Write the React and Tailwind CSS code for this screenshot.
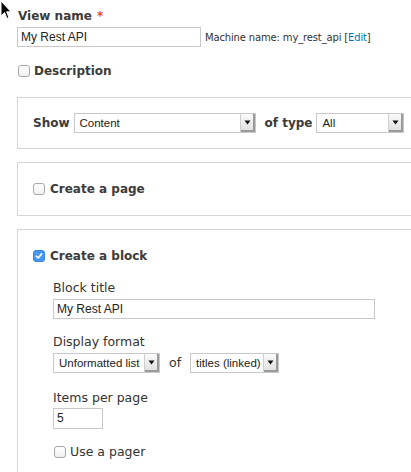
import React from "react";

// Drupal Views wizard, mac-style form controls
const LUCIDA = { fontFamily: '"DejaVu Sans", Verdana, sans-serif' };
const HELV = { fontFamily: '"Liberation Sans", Arial, sans-serif' };

function Cursor() {
  return (
    <svg className="absolute left-0 top-0" width="12" height="20" viewBox="0 0 12 20">
      <path d="M1 1 L1 16 L4.5 12.5 L7 18.5 L9 17.6 L6.6 11.8 L11 11.8 Z" fill="#000" stroke="#fff" strokeWidth="1" />
    </svg>
  );
}

function Checkbox({ checked }) {
  if (checked) {
    return (
      <span className="inline-flex w-[12px] h-[12px] rounded-[3px] bg-[#4598f4] border border-[#3585e6] items-center justify-center shrink-0">
        <svg width="8" height="8" viewBox="0 0 8 8">
          <path d="M1.3 4.2 L3.2 6 L6.7 1.8" fill="none" stroke="#fff" strokeWidth="1.6" strokeLinecap="round" strokeLinejoin="round" />
        </svg>
      </span>
    );
  }
  return (
    <span className="inline-block w-[12px] h-[12px] rounded-[3px] border border-[#a8a8a8] bg-gradient-to-b from-white to-[#f0f0f0] shrink-0" />
  );
}

function Select({ value, width }) {
  return (
    <div
      className="flex h-[20px] border border-[#c8c8c8] bg-white items-stretch"
      style={{ width }}
    >
      <span className="flex-1 pl-[5px] text-[11.5px] leading-[18px] text-[#222] whitespace-nowrap overflow-hidden" style={HELV}>
        {value}
      </span>
      <span className="w-[15px] border-l border-[#cfcfcf] bg-gradient-to-b from-[#fafafa] to-[#dedede] flex items-center justify-center shadow-[inset_-2px_-2px_0_#9a9a9a]">
        <svg width="7" height="5" viewBox="0 0 7 5" className="-mt-[1px] -ml-[1px]">
          <path d="M0.5 0.5 L6.5 0.5 L3.5 4.5 Z" fill="#111" />
        </svg>
      </span>
    </div>
  );
}

function TextInput({ value, width, height = "20px" }) {
  return (
    <div
      className="border border-[#c8c8c8] bg-white pl-[3px] text-[12px] leading-[18px] text-[#222]"
      style={{ ...HELV, width, height }}
    >
      {value}
    </div>
  );
}

export default function App() {
  return (
    <div className="relative w-[411px] h-[472px] overflow-hidden bg-white text-[#333]" style={LUCIDA}>
      <Cursor />
      <div className="pl-[17px] pt-[7px]">
        <div className="flex items-baseline pl-[1px] text-[12px] font-bold leading-[18px] text-[#3b3b3b]">
          View name <span className="ml-[5px] text-[#e24b2b]">*</span>
        </div>
        <div className="flex items-center mt-[2px]">
          <TextInput value="My Rest API" width="184px" />
          <span className="ml-[4px] text-[10px] text-[#333] tracking-[-0.15px]">
            Machine name: my_rest_api [<span className="text-[#0074bd]">Edit</span>]
          </span>
        </div>

        <div className="flex items-center gap-[4px] mt-[17px] pl-[1px] h-[14px]">
          <Checkbox />
          <span className="text-[12px] font-bold leading-[14px] text-[#3b3b3b]">Description</span>
        </div>

        <div className="mt-[19px] w-[410px] h-[52px] border border-[#d6d6d6] flex items-center pl-[15px]">
          <span className="text-[12px] font-bold text-[#3b3b3b] mr-[4px]">Show</span>
          <Select value="Content" width="182px" />
          <span className="text-[12px] font-bold text-[#3b3b3b] ml-[9px] mr-[4px]">of type</span>
          <Select value="All" width="88px" />
        </div>

        <div className="mt-[13px] w-[410px] h-[54px] border border-[#d6d6d6] flex items-center gap-[5px] pl-[15px]">
          <Checkbox />
          <span className="text-[12px] font-bold text-[#3b3b3b]">Create a page</span>
        </div>

        <div className="mt-[13px] w-[410px] h-[260px] border border-[#d6d6d6] pl-[15px] pt-[18px]">
          <div className="flex items-center gap-[5px] h-[16px]">
            <Checkbox checked />
            <span className="text-[12px] font-bold leading-[16px] text-[#3b3b3b]">Create a block</span>
          </div>
          <div className="pl-[20px]">
            <div className="mt-[16px] text-[12.5px] leading-[16px]">Block title</div>
            <div className="mt-[3px]">
              <TextInput value="My Rest API" width="322px" />
            </div>

            <div className="mt-[15px] text-[12.5px] leading-[16px]">Display format</div>
            <div className="flex items-center mt-[3px]">
              <Select value="Unformatted list" width="107px" />
              <span className="text-[12.5px] mx-[9px]">of</span>
              <Select value="titles (linked)" width="89px" />
            </div>

            <div className="mt-[17px] text-[12.5px] leading-[16px]">Items per page</div>
            <div className="mt-[2px]">
              <TextInput value="5" width="50px" height="21px" />
            </div>

            <div className="flex items-center gap-[4px] mt-[15px] pl-[1px] h-[16px]">
              <Checkbox />
              <span className="text-[12.5px] leading-[16px]">Use a pager</span>
            </div>
          </div>
        </div>
      </div>
    </div>
  );
}
